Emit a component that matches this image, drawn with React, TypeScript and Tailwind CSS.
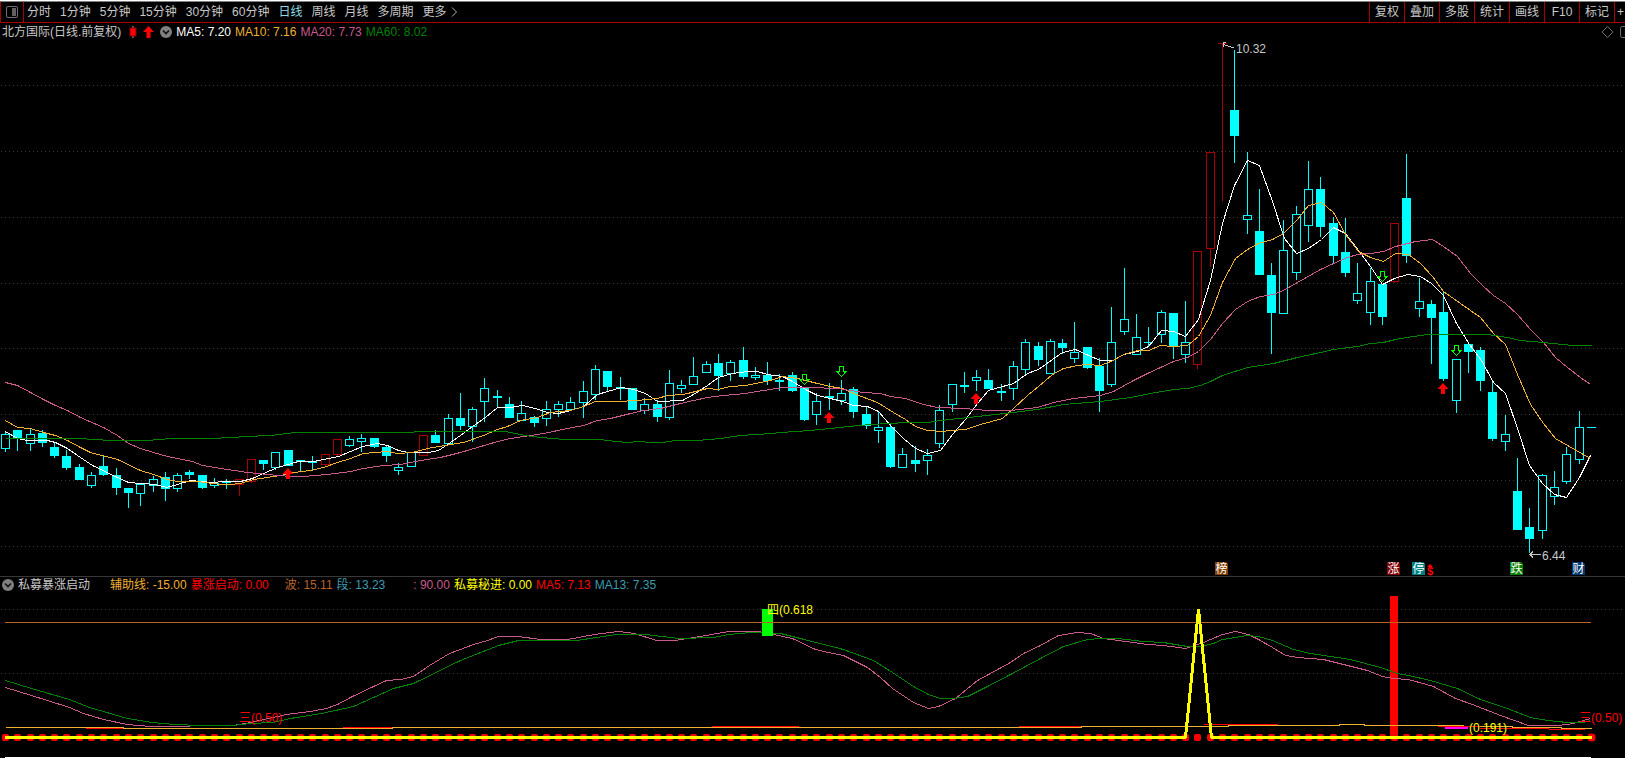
import React from 'react';

type Kind = 'h' | 'f' | 'r';
type Candle = [Kind, number, number, number, number];
type Points = [number, number][];

const CYAN = '#00ffff';
const DARK_RED = '#a80000';
const PINK = '#c85a8c';
const AMBER = '#f0b030';
const GREEN = '#008400';

/* kind (hollow / filled / limit-up), high, body top, body bottom, low */
const CANDLES: Candle[] = [
  ['h', 431, 434, 449, 452], ['f', 430, 430, 438, 451], ['h', 428, 434, 444, 451], ['f', 430, 433, 443, 447],
  ['f', 443, 447, 456, 458], ['f', 450, 456, 468, 470], ['f', 464, 467, 480, 480], ['h', 472, 475, 486, 488],
  ['f', 456, 466, 475, 476], ['f', 468, 475, 488, 495], ['f', 488, 488, 493, 508], ['h', 484, 484, 494, 506],
  ['h', 476, 479, 486, 492], ['f', 472, 477, 489, 501], ['h', 473, 475, 489, 492], ['f', 470, 472, 475, 479],
  ['f', 475, 475, 488, 489], ['h', 478, 483, 486, 488], ['f', 479, 481, 483, 489], ['r', 479, 479, 485, 496],
  ['r', 459, 459, 482, 483], ['f', 460, 460, 464, 470], ['h', 452, 452, 468, 470], ['f', 450, 450, 466, 466],
  ['f', 460, 460, 462, 471], ['f', 456, 461, 463, 470], ['r', 454, 454, 465, 467], ['r', 439, 439, 455, 457],
  ['h', 436, 439, 446, 447], ['h', 434, 438, 442, 452], ['f', 438, 438, 447, 448], ['f', 446, 447, 456, 462],
  ['h', 463, 467, 471, 475], ['h', 452, 452, 467, 467], ['r', 435, 435, 456, 456], ['f', 430, 435, 443, 443],
  ['h', 414, 418, 444, 444], ['f', 393, 418, 426, 430], ['h', 407, 409, 427, 442], ['h', 378, 388, 402, 422],
  ['f', 390, 396, 398, 407], ['f', 397, 404, 418, 418], ['h', 401, 413, 421, 421], ['f', 416, 417, 423, 427],
  ['h', 401, 409, 419, 426], ['h', 401, 404, 410, 417], ['h', 397, 402, 410, 410], ['h', 381, 391, 403, 418],
  ['h', 365, 369, 395, 400], ['f', 371, 371, 387, 392], ['f', 377, 387, 389, 400], ['f', 388, 388, 410, 410],
  ['h', 398, 404, 411, 414], ['f', 400, 404, 417, 422], ['h', 370, 383, 418, 420], ['h', 380, 385, 389, 393],
  ['h', 357, 376, 385, 385], ['h', 361, 364, 373, 373], ['f', 354, 363, 376, 391], ['h', 360, 362, 374, 381],
  ['f', 347, 360, 377, 379], ['h', 367, 375, 378, 380], ['f', 362, 375, 381, 385], ['f', 374, 380, 382, 391],
  ['f', 372, 375, 391, 392], ['f', 388, 388, 420, 421], ['h', 393, 401, 415, 425], ['f', 383, 396, 398, 410],
  ['h', 380, 393, 401, 405], ['f', 387, 389, 412, 418], ['f', 406, 414, 426, 429], ['h', 411, 427, 431, 443],
  ['f', 423, 427, 467, 468], ['h', 448, 454, 468, 468], ['f', 446, 460, 464, 472], ['h', 449, 455, 461, 475],
  ['h', 405, 410, 444, 448], ['h', 384, 384, 405, 412], ['f', 372, 385, 387, 393], ['h', 370, 377, 381, 391],
  ['f', 369, 380, 389, 389], ['f', 384, 391, 393, 401], ['h', 361, 366, 389, 400], ['h', 339, 342, 370, 374],
  ['f', 342, 346, 360, 366], ['h', 339, 341, 374, 374], ['f', 339, 343, 348, 354], ['h', 322, 352, 359, 363],
  ['f', 347, 347, 368, 369], ['f', 358, 366, 391, 412], ['h', 307, 342, 385, 387], ['h', 268, 319, 332, 335],
  ['h', 314, 337, 355, 355], ['f', 327, 342, 343, 347], ['h', 310, 312, 335, 343], ['f', 313, 313, 346, 359],
  ['h', 301, 342, 355, 363], ['r', 251, 251, 365, 369], ['r', 152, 152, 249, 267], ['r', 43, 43, 44, 201],
  ['f', 50, 110, 136, 163], ['h', 152, 215, 220, 234], ['f', 189, 231, 275, 275], ['f', 263, 275, 313, 354],
  ['h', 220, 250, 314, 314], ['h', 206, 214, 273, 280], ['h', 161, 189, 226, 242], ['f', 177, 189, 227, 237],
  ['f', 217, 223, 256, 263], ['f', 218, 252, 273, 277], ['h', 263, 293, 301, 304], ['h', 268, 281, 313, 325],
  ['f', 284, 284, 317, 325], ['r', 223, 223, 282, 283], ['f', 154, 198, 256, 263], ['h', 278, 301, 309, 317],
  ['f', 300, 304, 318, 364], ['f', 291, 312, 379, 381], ['h', 359, 359, 401, 413], ['f', 344, 344, 352, 373],
  ['f', 347, 350, 381, 391], ['f', 381, 392, 439, 441], ['h', 415, 434, 442, 451], ['f', 458, 491, 530, 530],
  ['f', 508, 527, 539, 553], ['h', 474, 475, 531, 539], ['h', 471, 487, 497, 505], ['h', 447, 454, 482, 484],
  ['h', 411, 427, 460, 464], ['f', 427, 427, 428, 428],
];

const MA60: Points = [[5,438],[79,438],[110,440],[146,440],[171,438],[208,438],[233,437],[245,436],[270,435],[295,432],[410,432],[418,431],[505,431],[525,435],[540,437],[565,439],[600,439],[615,441],[628,442],[638,441],[650,442],[662,442],[675,440],[697,440],[720,438],[740,435],[772,433],[780,432],[810,430],[830,428],[848,426],[870,424],[907,422],[927,422],[940,420],[977,416],[1013,412],[1037,409],[1063,404],[1100,401],[1130,397],[1150,393],[1173,389],[1187,388],[1200,385],[1210,381],[1222,375],[1247,367],[1273,363],[1297,357],[1320,352],[1333,349],[1357,346],[1370,343],[1383,342],[1395,339],[1413,336],[1427,334],[1487,334],[1507,337],[1520,340],[1543,342],[1572,345],[1591,345]];
const MA20: Points = [[5,382],[17,385],[30,392],[43,399],[55,405],[67,410],[80,417],[103,427],[117,435],[128,443],[140,448],[153,452],[167,456],[177,458],[192,461],[202,465],[227,469],[247,472],[267,474],[290,476],[303,476],[327,474],[350,471],[363,468],[383,465],[400,464],[420,460],[440,457],[460,452],[477,447],[497,441],[510,438],[543,433],[567,428],[583,425],[597,420],[610,418],[630,413],[643,410],[660,408],[680,403],[693,400],[707,397],[723,395],[745,393],[763,390],[783,387],[810,387],[837,388],[850,390],[863,392],[880,393],[890,396],[905,398],[923,404],[937,407],[963,408],[987,410],[1010,410],[1037,407],[1053,402],[1073,398],[1100,395],[1113,391],[1133,380],[1147,373],[1173,361],[1187,357],[1198,351],[1210,339],[1222,323],[1235,309],[1247,301],[1260,296],[1273,294],[1283,290],[1297,282],[1320,269],[1333,263],[1347,257],[1357,254],[1370,253],[1383,251],[1395,246],[1415,241],[1432,239],[1443,246],[1457,256],[1470,273],[1482,285],[1493,295],[1505,303],[1517,314],[1530,329],[1543,342],[1555,357],[1567,367],[1580,377],[1590,384]];
const MA10: Points = [[5,420],[17,427],[30,428],[43,432],[55,435],[67,440],[80,447],[90,452],[117,459],[140,470],[153,474],[167,479],[177,481],[197,481],[220,484],[230,484],[240,483],[253,479],[280,475],[293,472],[310,470],[323,467],[337,462],[350,458],[363,453],[387,451],[397,453],[412,452],[427,448],[450,444],[463,442],[483,435],[497,429],[507,426],[520,420],[537,417],[550,412],[570,410],[583,406],[595,401],[617,401],[637,400],[657,398],[667,395],[683,394],[707,388],[717,389],[730,386],[745,385],[760,382],[770,380],[782,376],[797,378],[817,383],[830,386],[842,388],[853,393],[877,402],[893,412],[905,419],[915,426],[927,430],[942,431],[950,430],[965,429],[980,424],[1002,418],[1013,408],[1027,395],[1038,386],[1052,374],[1063,368],[1077,365],[1087,364],[1100,365],[1113,360],[1123,354],[1137,350],[1148,350],[1160,345],[1173,346],[1187,345],[1198,336],[1210,315],[1222,282],[1235,258],[1247,249],[1258,243],[1272,239],[1283,233],[1297,219],[1308,205],[1321,202],[1333,212],[1345,234],[1358,251],[1370,257],[1383,261],[1395,253],[1408,254],[1420,263],[1432,276],[1443,291],[1460,303],[1480,317],[1493,333],[1505,344],[1517,374],[1530,404],[1543,423],[1555,438],[1567,445],[1590,458]];
const MA5: Points = [[5,431],[17,438],[27,440],[47,440],[55,442],[67,448],[80,457],[92,465],[117,477],[128,482],[155,484],[166,487],[177,484],[190,480],[200,481],[213,482],[222,481],[240,481],[252,478],[263,473],[277,467],[298,461],[313,461],[338,456],[350,451],[362,446],[377,443],[387,445],[398,450],[408,452],[428,452],[438,450],[450,442],[460,435],[472,426],[485,417],[497,407],[510,407],[522,405],[535,408],[547,412],[558,413],[570,410],[583,406],[597,394],[607,391],[621,387],[633,389],[645,393],[657,401],[682,400],[693,394],[707,385],[718,377],[732,373],[747,371],[757,371],[767,374],[782,376],[792,381],[805,389],[817,395],[830,398],[842,401],[853,405],[867,406],[878,411],[890,425],[903,438],[915,448],[927,453],[940,450],[952,434],[965,419],[977,403],[988,390],[1013,383],[1027,373],[1038,369],[1052,359],[1062,352],[1075,349],[1088,355],[1100,360],[1113,360],[1123,354],[1137,351],[1148,346],[1161,330],[1173,331],[1185,336],[1198,319],[1210,280],[1222,223],[1234,185],[1247,160],[1259,165],[1271,198],[1284,238],[1296,253],[1308,248],[1321,239],[1333,227],[1345,233],[1358,250],[1370,266],[1382,284],[1394,278],[1407,274],[1420,276],[1431,283],[1443,295],[1456,323],[1469,344],[1481,360],[1493,382],[1505,393],[1517,428],[1529,465],[1542,483],[1554,494],[1566,497],[1579,477],[1590,455]];

const WAVE_PINK: Points = [[5,687],[31,695],[69,707],[83,713],[103,719],[127,724],[150,726],[183,726],[196,725],[233,725],[250,722],[286,714],[310,711],[326,708],[337,704],[350,697],[373,686],[386,680],[400,679],[413,676],[429,665],[449,653],[460,649],[473,644],[487,640],[498,636],[518,636],[540,639],[567,639],[594,634],[618,631],[634,633],[656,640],[674,640],[700,636],[728,631],[758,631],[773,634],[792,638],[815,649],[828,652],[843,655],[867,667],[880,677],[892,688],[913,702],[928,708],[938,706],[955,698],[977,680],[1010,662],[1023,653],[1040,645],[1058,635],[1077,632],[1090,633],[1103,638],[1133,642],[1147,644],[1163,645],[1185,648],[1203,642],[1222,634],[1235,631],[1248,634],[1258,639],[1272,647],[1285,655],[1297,657],[1323,659],[1347,665],[1367,670],[1382,676],[1393,678],[1408,679],[1433,686],[1455,698],[1472,704],[1500,715],[1528,725],[1558,725],[1573,723],[1590,718]];
const WAVE_GREEN: Points = [[5,680],[31,688],[69,699],[89,707],[127,718],[152,722],[174,724],[201,725],[232,725],[250,723],[272,722],[290,718],[321,713],[353,706],[373,697],[393,688],[413,683],[460,660],[498,645],[518,640],[576,640],[616,634],[645,634],[679,638],[713,637],[728,634],[750,632],[780,633],[800,638],[843,649],[873,660],[892,672],[913,686],[928,694],[940,698],[953,698],[967,696],[987,686],[1010,674],[1040,658],[1063,646],[1087,639],[1100,638],[1117,638],[1143,641],[1163,642],[1187,646],[1200,646],[1213,643],[1222,639],[1247,635],[1258,636],[1272,640],[1293,649],[1310,653],[1350,659],[1380,667],[1397,673],[1408,675],[1430,680],[1457,688],[1480,699],[1507,708],[1530,717],[1547,720],[1567,722],[1583,722],[1590,720]];
const FLAT_AMBER: Points = [[5,727],[123,727],[123,728],[392,728],[392,727],[1081,727],[1081,726],[1228,726],[1228,725],[1339,725],[1339,724],[1364,724],[1364,725],[1463,725],[1463,726],[1512,726],[1512,727],[1561,727],[1561,728],[1591,728]];
const FLAT_RED = [[86, 123, 728], [343, 392, 727], [712, 799, 726], [1019, 1081, 726], [1204, 1278, 724], [1438, 1480, 726], [1480, 1549, 728], [1549, 1585, 729]];

const cx = (i: number) => 5 + Math.round(i * 12.293);
const toPoints = (pts: Points) => pts.map(([x, y]) => `${x + 0.5},${y + 0.5}`).join(' ');

function Line({ pts, color, width = 1 }: { pts: Points; color: string; width?: number }) {
  return <polyline points={toPoints(pts)} fill="none" stroke={color} strokeWidth={width} shapeRendering="crispEdges" />;
}

function GridLine({ y }: { y: number }) {
  return <line x1="1" x2="1625" y1={y + 0.5} y2={y + 0.5} stroke="#3a3a3a" strokeDasharray="1 3" shapeRendering="crispEdges" />;
}

function CandleShape({ i, candle }: { i: number; candle: Candle }) {
  const [kind, high, top, bottom, low] = candle;
  const x = cx(i);
  const color = kind === 'r' ? DARK_RED : CYAN;
  const flat = bottom - top < 2;
  return (
    <g shapeRendering="crispEdges" fill={color}>
      <rect x={x} y={high} width="1" height={top - high} />
      <rect x={x} y={bottom} width="1" height={low - bottom} />
      {kind === 'f' || flat ? (
        <rect x={x - 4} y={top} width="9" height={bottom - top} />
      ) : (
        <rect x={x - 3.5} y={top + 0.5} width="8" height={bottom - top - 1} fill="none" stroke={color} />
      )}
    </g>
  );
}

function BuyArrow({ x, y }: { x: number; y: number }) {
  return <path d={`M${x} ${y}l5.5 6h-3.5v5h-4v-5h-3.5z`} fill="#ff0000" />;
}

function SellArrow({ x, y }: { x: number; y: number }) {
  return <path d={`M${x - 1.5} ${y + 0.5}h4v5h2.5l-4.5 5l-4.5 -5h2.5z`} fill="none" stroke="#00ff00" shapeRendering="crispEdges" />;
}

const BADGES = [
  { x: 1215, text: '榜', color: '#804000' },
  { x: 1387, text: '涨', color: '#800000' },
  { x: 1412, text: '停', color: '#008080' },
  { x: 1510, text: '跌', color: '#008000' },
  { x: 1572, text: '财', color: '#003870' },
];

function PriceChart() {
  return (
    <svg viewBox="0 40 1625 536" className="block h-auto w-full" role="img" aria-label="日线">
      {[85, 151, 217, 283, 348, 414, 480, 546].map((y) => <GridLine key={y} y={y} />)}
      {CANDLES.map((c, i) => <CandleShape key={i} i={i} candle={c} />)}
      <Line pts={MA5} color="#ffffff" />
      <Line pts={MA10} color={AMBER} />
      <Line pts={MA20} color={PINK} />
      <Line pts={MA60} color={GREEN} />
      {[[288, 468], [829, 412], [976, 393], [1443, 383]].map(([x, y]) => <BuyArrow key={x} x={x} y={y} />)}
      {[[804, 374], [841, 366], [1382, 271], [1456, 345]].map(([x, y]) => <SellArrow key={x} x={x} y={y} />)}
      <g stroke="#c8c8c8" fill="none" shapeRendering="crispEdges">
        <path d="M1223.5 44.5L1234 48M1226 42.5H1223.5V47" />
        <path d="M1530 554.5H1541M1533 551.5L1530 554.5L1533 557.5" />
      </g>
      <g fill="#c8c8c8" fontSize="12">
        <text x="1236" y="53">10.32</text>
        <text x="1542" y="560">6.44</text>
      </g>
      {BADGES.map((b) => (
        <g key={b.text}>
          <path d={`M${b.x} 562h11l2 2v11h-13z`} fill={b.color} />
          <text x={b.x + 0.5} y="573" fontSize="12" fill="#ffffff">{b.text}</text>
        </g>
      ))}
      <path d="M1430 564l3 3h-6z" fill="#ff0000" />
      <text x="1427" y="575" fontSize="11" fontWeight="700" fill="#ff0000">$</text>
    </svg>
  );
}

function IndicatorChart() {
  return (
    <svg viewBox="0 594 1625 164" className="block h-auto w-full" role="img" aria-label="私募暴涨启动">
      <GridLine y={609} />
      <GridLine y={673} />
      <rect x="1390" y="596" width="8" height="141" fill="#ff0000" shapeRendering="crispEdges" />
      <Line pts={WAVE_PINK} color={PINK} />
      <Line pts={WAVE_GREEN} color={GREEN} />
      <rect x="762" y="609" width="11" height="27" fill="#00ff00" shapeRendering="crispEdges" />
      <rect x="5" y="622" width="1586" height="1" fill="#b86428" shapeRendering="crispEdges" />
      <Line pts={FLAT_AMBER} color={AMBER} />
      {FLAT_RED.map(([a, b, y]) => <rect key={a} x={a} y={y} width={b - a} height="1" fill="#ff0000" shapeRendering="crispEdges" />)}
      <rect x="1445" y="727" width="23" height="2" fill="#ff00ff" shapeRendering="crispEdges" />
      {CANDLES.map((_, i) => (
        <rect key={i} x={cx(i) - 3} y="734" width="7" height="7" rx="2" fill="#ff0000" />
      ))}
      <circle cx="1591.5" cy="737.5" r="4" fill="#ff0000" />
      <polyline points="5,737.5 1185.5,737.5 1198.5,609 1211.5,737.5 1592,737.5" fill="none" stroke="#ffff00" strokeWidth="3" strokeLinejoin="bevel" shapeRendering="crispEdges" />
      <g fontSize="12">
        <text x="767" y="614" fill="#ffff00">四(0.618</text>
        <text x="239" y="722" fill="#ff0000">三(0.50)</text>
        <text x="1579" y="722" fill="#ff0000">三(0.50)</text>
        <text x="1469" y="732" fill="#ffff00">(0.191)</text>
      </g>
      <rect x="5" y="757" width="1586" height="1" fill="#ffffff" shapeRendering="crispEdges" />
    </svg>
  );
}

function CollapseButton() {
  return (
    <button type="button" aria-label="展开" className="shrink-0">
      <svg width="12" height="12" viewBox="0 0 12 12" className="block">
        <circle cx="6" cy="6" r="6" fill="#808080" />
        <path d="M3 4.5L6 7.5L9 4.5" fill="none" stroke="#101010" strokeWidth="1.6" />
      </svg>
    </button>
  );
}

const PERIODS = ['分时', '1分钟', '5分钟', '15分钟', '30分钟', '60分钟', '日线', '周线', '月线', '多周期'];
const TOOLS = ['复权', '叠加', '多股', '统计', '画线', 'F10', '标记'];

export default function App() {
  return (
    <main className="w-full overflow-hidden bg-black font-['Liberation_Sans','Noto_Sans_CJK_SC',sans-serif] text-xs text-[#c8c8c8]">
      <header className="flex h-[23px] items-stretch border-b border-[#a80000] bg-black whitespace-nowrap shadow-[inset_0_1px_0_#ffffff,inset_0_2px_0_#808080]">
        <button type="button" aria-label="侧栏" className="mt-0.5 flex w-6 items-center justify-center border-x border-[#a80000]">
          <svg width="12" height="12" viewBox="0 0 12 12">
            <rect x="0.5" y="0.5" width="11" height="11" rx="1.5" fill="none" stroke="#707070" />
            <rect x="6" y="2" width="4" height="8" fill="#606060" />
          </svg>
        </button>
        <nav className="flex items-center gap-[9px] pt-0.5 pl-[3px]">
          {PERIODS.map((p) => (
            <button key={p} type="button" className={p === '日线' ? 'text-[#8fdce6]' : ''}>{p}</button>
          ))}
          <button type="button" className="flex items-center gap-1">
            更多
            <svg width="7" height="10" viewBox="0 0 7 10">
              <path d="M1 0.5L5.5 5L1 9.5" fill="none" stroke="#b0b0b0" />
            </svg>
          </button>
        </nav>
        <div className="mt-0.5 ml-auto flex">
          {TOOLS.map((t) => (
            <button key={t} type="button" className="w-[35px] border-l border-[#a80000]">{t}</button>
          ))}
          <button type="button" className="w-[11px] overflow-hidden border-l border-[#a80000] pl-0.5 text-left">+</button>
        </div>
      </header>

      <div className="flex h-[17px] items-center gap-1 pl-0.5 leading-4 whitespace-nowrap">
        <h1>北方国际(日线.前复权)</h1>
        <div className="flex items-center gap-1.5 pl-1">
          <svg width="8" height="12" viewBox="0 0 8 12">
            <path d="M4 0V12" stroke="#c0c0c0" />
            <rect x="1" y="2" width="6" height="8" fill="#ff0000" stroke="#900000" />
          </svg>
          <svg width="11" height="12" viewBox="0 0 11 12">
            <path d="M5.5 0L11 6H7.5V12H3.5V6H0z" fill="#ff0000" />
          </svg>
          <CollapseButton />
        </div>
        <span className="text-white">MA5: 7.20</span>
        <span className="text-[#f0b030]">MA10: 7.16</span>
        <span className="text-[#c85a8c]">MA20: 7.73</span>
        <span className="text-[#008400]">MA60: 8.02</span>
        <svg width="24" height="12" viewBox="0 0 24 12" className="ml-auto">
          <path d="M6.5 0.5L12 6L6.5 11.5L1 6z" fill="none" stroke="#707070" />
          <rect x="19.5" y="0.5" width="12" height="11" rx="2" fill="none" stroke="#707070" />
        </svg>
      </div>

      <PriceChart />

      <section>
        <div className="flex h-[18px] items-center gap-1 border-t border-[#383838] pb-0.5 pl-0.5 leading-4 whitespace-nowrap">
          <CollapseButton />
          <h2>私募暴涨启动</h2>
          <span className="pl-4 text-[#f0b030]">辅助线: -15.00</span>
          <span className="text-[#ff0000]">暴涨启动: 0.00</span>
          <span className="pl-3 text-[#b86428]">波: 15.11</span>
          <span className="text-[#3c9cb0]">段: 13.23</span>
          <span className="pl-6 text-[#c85a8c]">: 90.00</span>
          <span className="text-[#ffff00]">私募秘进: 0.00</span>
          <span className="text-[#ff0000]">MA5: 7.13</span>
          <span className="text-[#3c9cb0]">MA13: 7.35</span>
        </div>
        <IndicatorChart />
      </section>
    </main>
  );
}
